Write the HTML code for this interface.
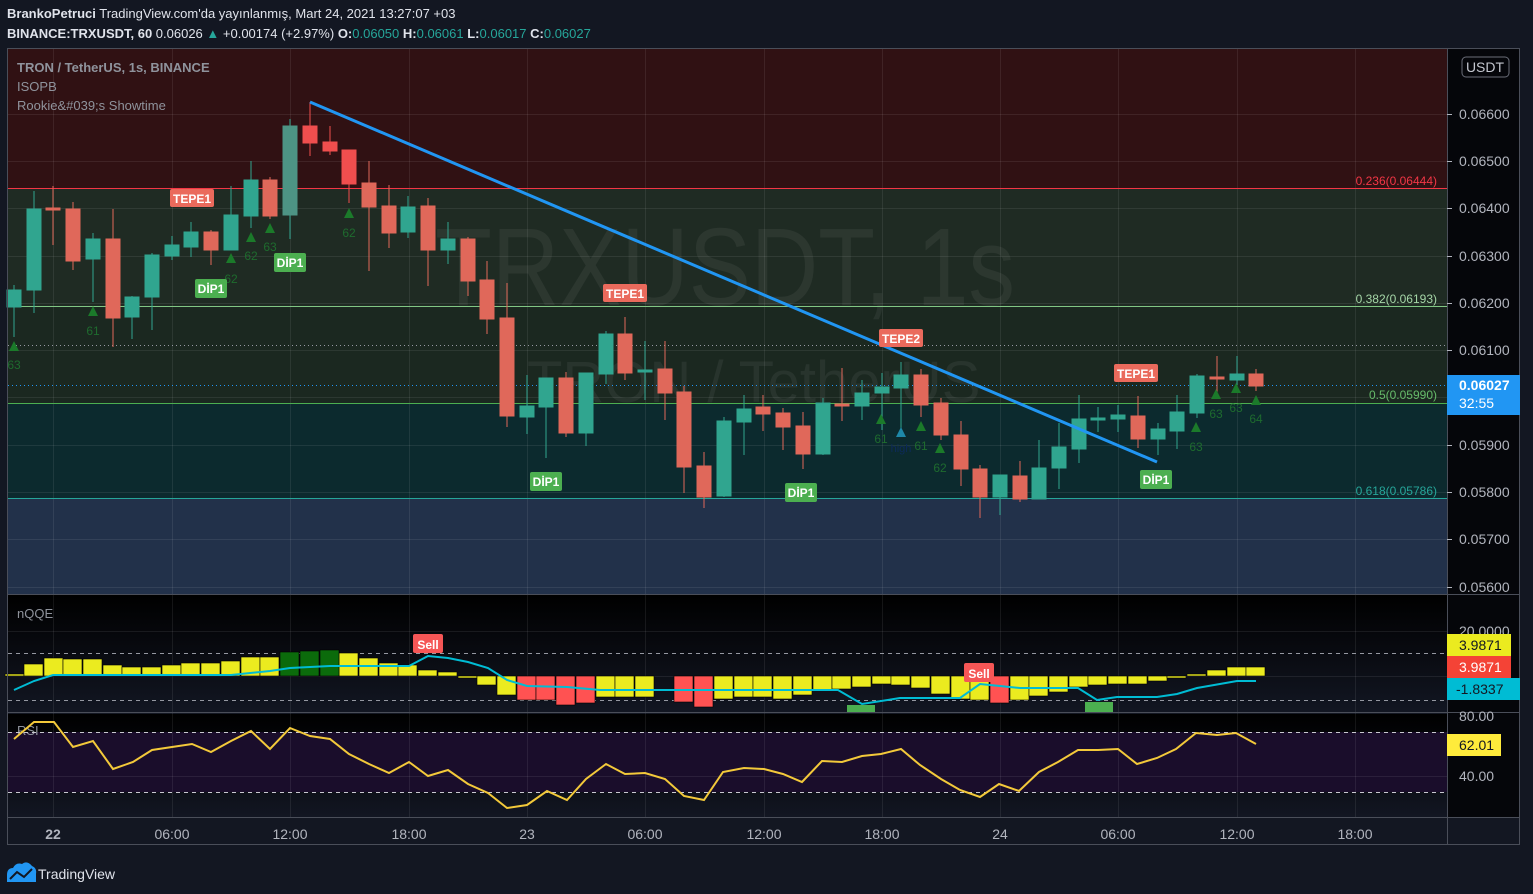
<!DOCTYPE html>
<html><head><meta charset="utf-8"><style>
html,body{margin:0;padding:0;background:#131722;width:1533px;height:894px;overflow:hidden}
svg{display:block;font-family:"Liberation Sans",sans-serif}
</style></head><body>
<svg width="1533" height="894" viewBox="0 0 1533 894" xmlns="http://www.w3.org/2000/svg">
<defs>
<linearGradient id="qg" x1="0" y1="0" x2="0" y2="1"><stop offset="0" stop-color="#000"/><stop offset="1" stop-color="#121622"/></linearGradient>
<linearGradient id="rg" x1="0" y1="0" x2="0" y2="1"><stop offset="0" stop-color="#000"/><stop offset="1" stop-color="#121622"/></linearGradient>
</defs>
<rect width="1533" height="894" fill="#131722"/>
<!-- header -->
<text x="7" y="18" font-size="13" fill="#e0e3eb"><tspan font-weight="bold">BrankoPetruci</tspan> TradingView.com'da yayınlanmış, Mart 24, 2021 13:27:07 +03</text>
<text x="7" y="38" font-size="13" fill="#e0e3eb"><tspan font-weight="bold">BINANCE:TRXUSDT, 60</tspan>  0.06026 <tspan fill="#26a69a">▲</tspan> +0.00174 (+2.97%) <tspan font-weight="bold">O:</tspan><tspan fill="#26a69a">0.06050</tspan> <tspan font-weight="bold">H:</tspan><tspan fill="#26a69a">0.06061</tspan> <tspan font-weight="bold">L:</tspan><tspan fill="#26a69a">0.06017</tspan> <tspan font-weight="bold">C:</tspan><tspan fill="#26a69a">0.06027</tspan></text>

<!-- main pane zones -->
<rect x="8" y="48" width="1439" height="140" fill="#301113"/>
<rect x="8" y="188" width="1439" height="118" fill="#1f2b23"/>
<rect x="8" y="306" width="1439" height="97" fill="#1b2820"/>
<rect x="8" y="403" width="1439" height="95" fill="#0c2a2e"/>
<rect x="8" y="498" width="1439" height="96" fill="#22314a"/>
<!-- nQQE & RSI panes -->
<rect x="8" y="595" width="1439" height="117" fill="url(#qg)"/>
<rect x="8" y="714" width="1439" height="103" fill="url(#rg)"/>
<rect x="8" y="732" width="1439" height="60" fill="#1a0d2b"/>
<!-- price axis -->
<rect x="1447" y="48" width="73" height="769" fill="#05060a"/>
<rect x="8" y="817" width="1512" height="28" fill="#131722"/>

<!-- grid -->
<g stroke="#ffffff" stroke-opacity="0.08" stroke-width="1">
<path d="M53.5 48V817M172.5 48V817M290.5 48V817M409.5 48V817M527.5 48V817M645.5 48V817M764.5 48V817M882.5 48V817M1000.5 48V817M1118.5 48V817M1237.5 48V817M1355.5 48V817"/>
<path d="M8 114.5H1447M8 161.5H1447M8 208.5H1447M8 256.5H1447M8 303.5H1447M8 350.5H1447M8 397.5H1447M8 445.5H1447M8 492.5H1447M8 539.5H1447M8 587.5H1447M8 631.5H1447M8 676.5H1447M8 776.5H1447"/>
</g>

<!-- watermark -->
<text x="435" y="305" font-size="110" fill="#ffffff" fill-opacity="0.06" textLength="580" lengthAdjust="spacingAndGlyphs">TRXUSDT, 1s</text>
<text x="527" y="402" font-size="58" fill="#ffffff" fill-opacity="0.06">TRON / TetherUS</text>

<!-- fib lines -->
<line x1="8" y1="188.5" x2="1447" y2="188.5" stroke="#f23645"/>
<line x1="8" y1="306.5" x2="1447" y2="306.5" stroke="#81c784"/>
<line x1="8" y1="403.5" x2="1447" y2="403.5" stroke="#4caf50"/>
<line x1="8" y1="498.5" x2="1447" y2="498.5" stroke="#26a69a"/>
<line x1="8" y1="345.5" x2="1447" y2="345.5" stroke="#9598a1" stroke-dasharray="1 3"/>
<line x1="8" y1="385.5" x2="1447" y2="385.5" stroke="#2196f3" stroke-dasharray="1 3"/>
<g font-size="12">
<text x="1437" y="185" text-anchor="end" fill="#f23645">0.236(0.06444)</text>
<text x="1437" y="303" text-anchor="end" fill="#a5d6a7">0.382(0.06193)</text>
<text x="1437" y="399" text-anchor="end" fill="#66bb6a">0.5(0.05990)</text>
<text x="1437" y="495" text-anchor="end" fill="#26a69a">0.618(0.05786)</text>
</g>

<!-- pane titles -->
<text x="17" y="72" font-size="13" font-weight="bold" fill="#8f939c">TRON / TetherUS, 1s, BINANCE</text>
<text x="17" y="91" font-size="13" fill="#8f939c">ISOPB</text>
<text x="17" y="110" font-size="13" fill="#8f939c">Rookie&amp;#039;s Showtime</text>
<text x="17" y="618" font-size="13" fill="#8f939c">nQQE</text>
<text x="17" y="735" font-size="13" fill="#8f939c">RSI</text>

<!-- candles green -->
<g fill="#30a58f" stroke="#30a58f" stroke-width="1">
<line x1="14" y1="285" x2="14" y2="337"/><rect x="7" y="290" width="14" height="17"/>
<line x1="34" y1="191" x2="34" y2="313"/><rect x="27" y="209" width="14" height="81"/>
<line x1="93" y1="233" x2="93" y2="302"/><rect x="86" y="239" width="14" height="20"/>
<line x1="132" y1="296" x2="132" y2="339"/><rect x="125" y="297" width="14" height="20"/>
<line x1="152" y1="253" x2="152" y2="330"/><rect x="145" y="255" width="14" height="42"/>
<line x1="172" y1="236" x2="172" y2="260"/><rect x="165" y="245" width="14" height="11"/>
<line x1="191" y1="222" x2="191" y2="257"/><rect x="184" y="232" width="14" height="15"/>
<line x1="231" y1="186" x2="231" y2="250"/><rect x="224" y="215" width="14" height="35"/>
<line x1="251" y1="161" x2="251" y2="228"/><rect x="244" y="180" width="14" height="36"/>
<line x1="290" y1="119" x2="290" y2="239"/><rect x="283" y="126" width="14" height="89" fill="#4d9484" stroke="#4d9484"/>
<line x1="408" y1="196" x2="408" y2="238"/><rect x="401" y="207" width="14" height="25"/>
<line x1="448" y1="222" x2="448" y2="264"/><rect x="441" y="239" width="14" height="11"/>
<line x1="527" y1="375" x2="527" y2="434"/><rect x="520" y="406" width="14" height="11"/>
<line x1="546" y1="378" x2="546" y2="458"/><rect x="539" y="378" width="14" height="29"/>
<line x1="586" y1="373" x2="586" y2="446"/><rect x="579" y="373" width="14" height="60"/>
<line x1="606" y1="331" x2="606" y2="384"/><rect x="599" y="334" width="14" height="40"/>
<line x1="645" y1="341" x2="645" y2="400"/><rect x="638" y="370" width="14" height="2"/>
<line x1="724" y1="417" x2="724" y2="497"/><rect x="717" y="421" width="14" height="75"/>
<line x1="744" y1="395" x2="744" y2="455"/><rect x="737" y="409" width="14" height="13"/>
<line x1="823" y1="398" x2="823" y2="455"/><rect x="816" y="403" width="14" height="51"/>
<line x1="862" y1="380" x2="862" y2="420"/><rect x="855" y="393" width="14" height="13"/>
<line x1="882" y1="373" x2="882" y2="430"/><rect x="875" y="387" width="14" height="6"/>
<line x1="901" y1="362" x2="901" y2="432"/><rect x="894" y="375" width="14" height="13"/>
<line x1="1000" y1="475" x2="1000" y2="515"/><rect x="993" y="475" width="14" height="22"/>
<line x1="1039" y1="440" x2="1039" y2="499"/><rect x="1032" y="468" width="14" height="31"/>
<line x1="1059" y1="423" x2="1059" y2="489"/><rect x="1052" y="447" width="14" height="21"/>
<line x1="1079" y1="395" x2="1079" y2="463"/><rect x="1072" y="419" width="14" height="30"/>
<line x1="1098" y1="407" x2="1098" y2="432"/><rect x="1091" y="418" width="14" height="2"/>
<line x1="1118" y1="405" x2="1118" y2="432"/><rect x="1111" y="415" width="14" height="4"/>
<line x1="1158" y1="423" x2="1158" y2="455"/><rect x="1151" y="429" width="14" height="10"/>
<line x1="1177" y1="395" x2="1177" y2="449"/><rect x="1170" y="412" width="14" height="19"/>
<line x1="1197" y1="374" x2="1197" y2="418"/><rect x="1190" y="376" width="14" height="37"/>
<line x1="1237" y1="356" x2="1237" y2="385"/><rect x="1230" y="374" width="14" height="6"/>
</g>
<!-- candles red -->
<g fill="#e0685a" stroke="#e0685a" stroke-width="1">
<line x1="53" y1="186" x2="53" y2="245"/><rect x="46" y="208" width="14" height="2"/>
<line x1="73" y1="202" x2="73" y2="270"/><rect x="66" y="209" width="14" height="52"/>
<line x1="113" y1="209" x2="113" y2="347"/><rect x="106" y="239" width="14" height="79"/>
<line x1="211" y1="230" x2="211" y2="265"/><rect x="204" y="232" width="14" height="18"/>
<line x1="270" y1="177" x2="270" y2="219"/><rect x="263" y="180" width="14" height="36"/>
<g fill="#f04e4e" stroke="#f04e4e">
<line x1="310" y1="102" x2="310" y2="156"/><rect x="303" y="126" width="14" height="17"/>
<line x1="330" y1="126" x2="330" y2="155"/><rect x="323" y="142" width="14" height="9"/>
<line x1="349" y1="150" x2="349" y2="203"/><rect x="342" y="150" width="14" height="34"/>
</g>
<line x1="369" y1="161" x2="369" y2="271"/><rect x="362" y="183" width="14" height="24"/>
<line x1="389" y1="185" x2="389" y2="248"/><rect x="382" y="206" width="14" height="27"/>
<line x1="428" y1="198" x2="428" y2="286"/><rect x="421" y="206" width="14" height="44"/>
<line x1="468" y1="237" x2="468" y2="296"/><rect x="461" y="239" width="14" height="42"/>
<line x1="487" y1="261" x2="487" y2="334"/><rect x="480" y="280" width="14" height="39"/>
<line x1="507" y1="283" x2="507" y2="427"/><rect x="500" y="318" width="14" height="98"/>
<line x1="566" y1="372" x2="566" y2="437"/><rect x="559" y="378" width="14" height="55"/>
<line x1="625" y1="317" x2="625" y2="380"/><rect x="618" y="334" width="14" height="39"/>
<line x1="665" y1="341" x2="665" y2="420"/><rect x="658" y="369" width="14" height="24"/>
<line x1="684" y1="386" x2="684" y2="493"/><rect x="677" y="392" width="14" height="75"/>
<line x1="704" y1="452" x2="704" y2="508"/><rect x="697" y="466" width="14" height="31"/>
<line x1="763" y1="395" x2="763" y2="431"/><rect x="756" y="407" width="14" height="7"/>
<line x1="783" y1="408" x2="783" y2="450"/><rect x="776" y="413" width="14" height="14"/>
<line x1="803" y1="412" x2="803" y2="469"/><rect x="796" y="426" width="14" height="28"/>
<line x1="842" y1="368" x2="842" y2="421"/><rect x="835" y="404" width="14" height="2"/>
<line x1="921" y1="369" x2="921" y2="417"/><rect x="914" y="375" width="14" height="30"/>
<line x1="941" y1="398" x2="941" y2="440"/><rect x="934" y="403" width="14" height="32"/>
<line x1="961" y1="421" x2="961" y2="486"/><rect x="954" y="435" width="14" height="34"/>
<line x1="980" y1="465" x2="980" y2="518"/><rect x="973" y="469" width="14" height="28"/>
<line x1="1020" y1="461" x2="1020" y2="502"/><rect x="1013" y="476" width="14" height="23"/>
<line x1="1138" y1="396" x2="1138" y2="448"/><rect x="1131" y="416" width="14" height="23"/>
<line x1="1217" y1="356" x2="1217" y2="398"/><rect x="1210" y="377" width="14" height="2"/>
<line x1="1256" y1="369" x2="1256" y2="391"/><rect x="1249" y="374" width="14" height="12"/>
</g>

<!-- trend line -->
<line x1="310" y1="102" x2="1157" y2="462" stroke="#2196f3" stroke-width="3"/>

<!-- triangles -->
<g fill="#1b7a2a">
<path d="M14 341l-5 10h10z"/><path d="M93 306l-5 10h10z"/><path d="M231 253l-5 10h10z"/><path d="M251 232l-5 10h10z"/><path d="M270 223l-5 10h10z"/><path d="M349 208l-5 10h10z"/>
<path d="M881 414l-5 10h10z"/><path d="M921 421l-5 10h10z"/><path d="M940 443l-5 10h10z"/><path d="M1196 422l-5 10h10z"/><path d="M1216 389l-5 10h10z"/><path d="M1236 383l-5 10h10z"/><path d="M1256 395l-5 10h10z"/>
</g>
<path d="M901 427l-5 10h10z" fill="#1e88a8"/>
<text x="901" y="452" font-size="11" fill="#0d2a5a" text-anchor="middle">high</text>
<g font-size="12" fill="#1e6b2e" text-anchor="middle">
<text x="14" y="369">63</text><text x="93" y="335">61</text><text x="231" y="283">62</text><text x="251" y="260">62</text><text x="270" y="251">63</text><text x="349" y="237">62</text>
<text x="881" y="443">61</text><text x="921" y="450">61</text><text x="940" y="472">62</text><text x="1196" y="451">63</text><text x="1216" y="418">63</text><text x="1236" y="412">63</text><text x="1256" y="423">64</text>
</g>

<!-- labels -->
<g font-size="12" font-weight="bold" fill="#fff" text-anchor="middle">
<rect x="170" y="189" width="44" height="18" rx="2" fill="#ea6a5c"/><text x="192" y="203">TEPE1</text>
<rect x="603" y="284" width="44" height="18" rx="2" fill="#ea6a5c"/><text x="625" y="298">TEPE1</text>
<rect x="879" y="329" width="44" height="18" rx="2" fill="#ea6a5c"/><text x="901" y="343">TEPE2</text>
<rect x="1114" y="364" width="44" height="18" rx="2" fill="#ea6a5c"/><text x="1136" y="378">TEPE1</text>
<rect x="195" y="279" width="32" height="19" rx="2" fill="#4caf50"/><text x="211" y="293">DİP1</text>
<rect x="274" y="253" width="32" height="19" rx="2" fill="#4caf50"/><text x="290" y="267">DİP1</text>
<rect x="530" y="472" width="32" height="19" rx="2" fill="#4caf50"/><text x="546" y="486">DİP1</text>
<rect x="785" y="483" width="32" height="19" rx="2" fill="#4caf50"/><text x="801" y="497">DİP1</text>
<rect x="1140" y="470" width="32" height="19" rx="2" fill="#4caf50"/><text x="1156" y="484">DİP1</text>
</g>

<!-- nQQE -->
<line x1="8" y1="653.5" x2="1447" y2="653.5" stroke="#9598a1" stroke-dasharray="4 4"/>
<line x1="8" y1="700.5" x2="1447" y2="700.5" stroke="#9598a1" stroke-dasharray="4 4"/>
<g stroke="#000" stroke-width="0.6">
<g fill="#ebeb1f">
<rect x="5" y="674" width="19" height="2"/><rect x="24" y="664" width="19" height="12"/><rect x="44" y="658" width="19" height="18"/><rect x="63" y="659" width="19" height="17"/><rect x="83" y="659" width="19" height="17"/><rect x="103" y="665" width="19" height="11"/><rect x="122" y="667" width="19" height="9"/><rect x="142" y="667" width="19" height="9"/><rect x="162" y="665" width="19" height="11"/><rect x="181" y="663" width="19" height="13"/><rect x="201" y="663" width="19" height="13"/><rect x="221" y="661" width="19" height="15"/><rect x="241" y="657" width="19" height="19"/><rect x="260" y="657" width="19" height="19"/>
<rect x="339" y="653" width="19" height="23"/><rect x="359" y="658" width="19" height="18"/><rect x="379" y="663" width="19" height="13"/><rect x="398" y="665" width="19" height="11"/><rect x="418" y="670" width="19" height="6"/><rect x="438" y="672" width="19" height="4"/>
<rect x="458" y="676" width="19" height="2"/><rect x="477" y="676" width="19" height="9"/><rect x="497" y="676" width="19" height="19"/>
<rect x="596" y="676" width="19" height="21"/><rect x="615" y="676" width="19" height="21"/><rect x="635" y="676" width="19" height="21"/>
<rect x="714" y="676" width="19" height="23"/><rect x="734" y="676" width="19" height="21"/><rect x="753" y="676" width="19" height="21"/><rect x="773" y="676" width="19" height="23"/><rect x="793" y="676" width="19" height="19"/><rect x="813" y="676" width="19" height="14"/><rect x="832" y="676" width="19" height="13"/><rect x="852" y="676" width="19" height="11"/><rect x="872" y="676" width="19" height="8"/><rect x="891" y="676" width="19" height="9"/><rect x="911" y="676" width="19" height="12"/><rect x="931" y="676" width="19" height="18"/><rect x="951" y="676" width="19" height="23"/><rect x="970" y="676" width="19" height="24"/>
<rect x="1010" y="676" width="19" height="24"/><rect x="1029" y="676" width="19" height="20"/><rect x="1049" y="676" width="19" height="16"/><rect x="1069" y="676" width="19" height="11"/><rect x="1088" y="676" width="19" height="9"/><rect x="1108" y="676" width="19" height="8"/><rect x="1128" y="676" width="19" height="8"/><rect x="1148" y="676" width="19" height="5"/>
<rect x="1167" y="676" width="19" height="2"/><rect x="1187" y="674" width="19" height="2"/><rect x="1207" y="670" width="19" height="6"/><rect x="1227" y="667" width="19" height="9"/><rect x="1246" y="667" width="19" height="9"/>
</g>
<g fill="#0b6b0b"><rect x="280" y="652" width="19" height="24"/><rect x="300" y="651" width="19" height="25"/><rect x="320" y="650" width="19" height="26"/></g>
<g fill="#ff5252">
<rect x="517" y="676" width="19" height="24"/><rect x="536" y="676" width="19" height="24"/><rect x="556" y="676" width="19" height="29"/><rect x="576" y="676" width="19" height="27"/>
<rect x="674" y="676" width="19" height="26"/><rect x="694" y="676" width="19" height="31"/>
<rect x="990" y="676" width="19" height="27"/>
</g>
</g>
<polyline fill="none" stroke="#00bcd4" stroke-width="2" points="14,690 34,681 53,675 231,675 270,671 290,668 330,666 409,666 428,656 448,658 468,662 488,668 507,680 527,686 567,687 600,690 838,690 862,704 900,698 960,698 980,684 1000,686 1020,688 1078,688 1097,700 1117,697 1157,697 1177,694 1197,688 1237,681 1256,681"/>
<rect x="413" y="634" width="30" height="19" rx="2" fill="#f55656"/><text x="428" y="649" font-size="12" font-weight="bold" fill="#fff" text-anchor="middle">Sell</text>
<rect x="964" y="663" width="30" height="19" rx="2" fill="#f55656"/><text x="979" y="678" font-size="12" font-weight="bold" fill="#fff" text-anchor="middle">Sell</text>
<rect x="847" y="705" width="28" height="7" fill="#4caf50"/>
<rect x="1085" y="702" width="28" height="10" fill="#4caf50"/>

<!-- RSI -->
<line x1="8" y1="732.5" x2="1447" y2="732.5" stroke="#c8c8d0" stroke-dasharray="4 4"/>
<line x1="8" y1="792.5" x2="1447" y2="792.5" stroke="#c8c8d0" stroke-dasharray="4 4"/>
<polyline fill="none" stroke="#f3c93a" stroke-width="2" points="14,739 34,722 54,722 73,747 93,741 113,769 133,762 152,750 172,747 192,744 211,752 231,741 251,731 270,749 290,728 310,736 330,739 349,754 369,764 389,773 409,762 428,776 448,770 468,784 488,793 507,808 527,805 547,791 567,800 586,779 606,764 625,774 645,773 665,779 684,796 704,800 723,772 744,768 764,769 783,774 802,782 822,761 842,762 862,756 881,754 901,749 920,765 941,779 960,790 980,797 999,784 1019,791 1039,772 1058,762 1078,750 1098,750 1118,749 1137,764 1157,758 1176,749 1196,733 1217,735 1236,733 1256,744"/>

<!-- pane separators & frame -->
<g stroke="#4a4e59" stroke-width="1" fill="none">
<rect x="7.5" y="48.5" width="1512" height="796"/>
<line x1="8" y1="594.5" x2="1520" y2="594.5"/>
<line x1="8" y1="712.5" x2="1520" y2="712.5"/>
<line x1="8" y1="817.5" x2="1520" y2="817.5"/>
<line x1="1447.5" y1="48" x2="1447.5" y2="845"/>
</g>

<!-- price axis labels -->
<rect x="1462" y="57" width="47" height="20" rx="4" fill="#05060a" stroke="#6a6d78"/>
<text x="1485" y="72" font-size="14" fill="#c4c7cf" text-anchor="middle">USDT</text>
<g font-size="14" fill="#b2b5be">
<text x="1459" y="119">0.06600</text><text x="1459" y="166">0.06500</text><text x="1459" y="213">0.06400</text><text x="1459" y="261">0.06300</text><text x="1459" y="308">0.06200</text><text x="1459" y="355">0.06100</text><text x="1459" y="450">0.05900</text><text x="1459" y="497">0.05800</text><text x="1459" y="544">0.05700</text><text x="1459" y="592">0.05600</text>
<text x="1459" y="636">20.0000</text><text x="1459" y="721">80.00</text><text x="1459" y="781">40.00</text>
</g>
<g stroke="#b2b5be"><path d="M1447 114.5h5M1447 161.5h5M1447 208.5h5M1447 256.5h5M1447 303.5h5M1447 350.5h5M1447 445.5h5M1447 492.5h5M1447 539.5h5M1447 587.5h5"/></g>
<rect x="1447" y="375" width="73" height="40" fill="#2196f3"/>
<text x="1459" y="390" font-size="14" font-weight="bold" fill="#fff">0.06027</text>
<text x="1459" y="408" font-size="14" fill="#fff">32:55</text>
<rect x="1447" y="634" width="64" height="22" fill="#ebeb1f"/><text x="1459" y="650" font-size="14" fill="#131722">3.9871</text>
<rect x="1447" y="656" width="64" height="22" fill="#f44336"/><text x="1459" y="672" font-size="14" fill="#fff">3.9871</text>
<rect x="1447" y="678" width="73" height="22" fill="#00bcd4"/><text x="1456" y="694" font-size="14" fill="#131722">-1.8337</text>
<rect x="1447" y="734" width="54" height="22" fill="#ffeb3b"/><text x="1459" y="750" font-size="14" fill="#131722">62.01</text>

<!-- time axis -->
<g font-size="14" fill="#b2b5be" text-anchor="middle">
<text x="53" y="839" font-weight="bold">22</text><text x="172" y="839">06:00</text><text x="290" y="839">12:00</text><text x="409" y="839">18:00</text><text x="527" y="839">23</text><text x="645" y="839">06:00</text><text x="764" y="839">12:00</text><text x="882" y="839">18:00</text><text x="1000" y="839">24</text><text x="1118" y="839">06:00</text><text x="1237" y="839">12:00</text><text x="1355" y="839">18:00</text>
</g>

<!-- footer logo -->
<path d="M7 882 L7 875 Q7 868 13 868 Q16 862 22 864 Q27 860 32 866 Q37 868 36 874 L36 882 Z" fill="#2196f3"/>
<polyline points="10,879 17,872 24,877 32,869" fill="none" stroke="#131722" stroke-width="2"/>
<text x="38" y="879" font-size="14" fill="#e0e3eb">TradingView</text>
</svg>
</body></html>
